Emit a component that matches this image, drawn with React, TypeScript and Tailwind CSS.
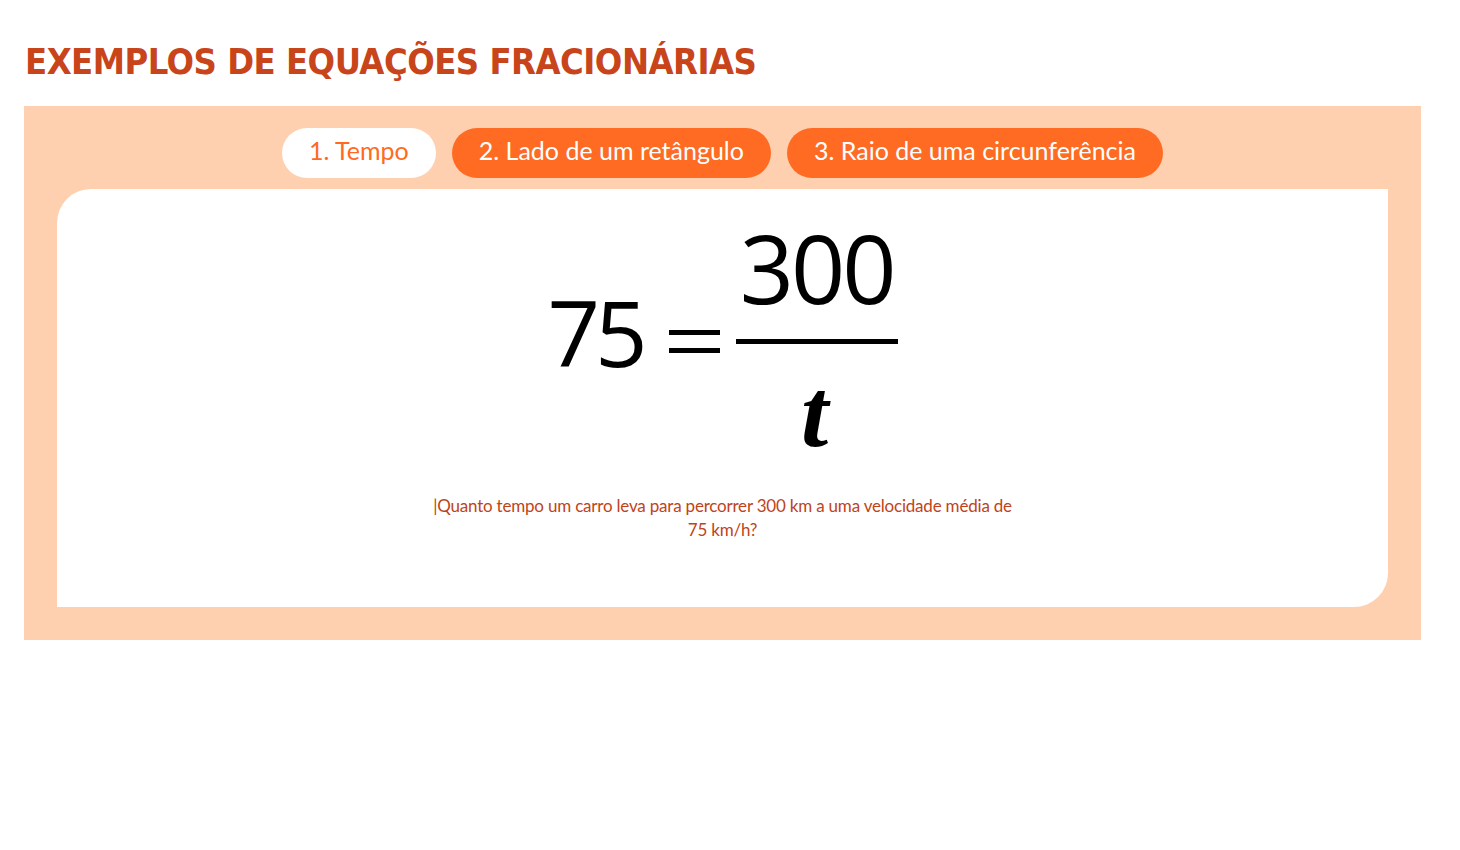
import React from "react";

export default function App() {
  const tabs = ["1. Tempo", "2. Lado de um retângulo", "3. Raio de uma circunferência"];
  return (
    <div className="w-[1460px] h-[850px] bg-white" style={{ fontFamily: "Lato, 'Open Sans', sans-serif" }}>
      <div className="pl-[24px] pr-[39px] pt-[40px]">
        <h1
          className="text-[36px] leading-[44px] font-bold text-[#c8441a] pl-[1px] tracking-[-0.5px]"
          style={{ fontFamily: "'DejaVu Sans Condensed', 'DejaVu Sans', sans-serif", fontStretch: "condensed" }}
        >
          EXEMPLOS DE EQUAÇÕES FRACIONÁRIAS
        </h1>
        <div className="mt-[22px] bg-[#ffd0b0] pt-[22px] pb-[33px] px-[33px]">
          <div className="flex justify-center gap-[16px]">
            {tabs.map((t, i) => (
              <div
                key={t}
                className={
                  "h-[50px] rounded-[25px] px-[27px] pb-[5px] flex items-center text-[25px] " +
                  (i === 0 ? "bg-white text-[#ff6a1f]" : "bg-[#ff6b22] text-white")
                }
              >
                {t}
              </div>
            ))}
          </div>
          <div className="mt-[11px] bg-white rounded-tl-[34px] rounded-br-[34px] h-[418px] flex flex-col items-center pt-[31px]">
            <div className="flex items-start text-black" style={{ fontFamily: "'Open Sans', sans-serif" }}>
              <span className="mt-[66px] text-[92px] leading-none tracking-[-5px]">75</span>
              <div className="mt-[110px] ml-[26px] mr-[16px] w-[51px] flex flex-col gap-[13px]">
                <div className="h-[5px] bg-black" />
                <div className="h-[5px] bg-black" />
              </div>
              <div className="flex flex-col items-center w-[162px]">
                <span className="h-[95px] text-[95px] leading-none tracking-[-3px]">300</span>
                <div className="w-[162px] h-[5px] bg-black mt-[24px]" />
                <span
                  className="mt-[20px] mr-[4px] h-[98px] text-[98px] leading-none italic font-bold"
                  style={{ fontFamily: "'Liberation Serif', serif" }}
                >
                  t
                </span>
              </div>
            </div>
            <p className="mt-[32px] w-[590px] text-center text-[17px] leading-[24px] text-[#c0431a] tracking-[-0.2px]">
              |Quanto tempo um carro leva para percorrer 300 km a uma velocidade média de 75 km/h?
            </p>
          </div>
        </div>
      </div>
    </div>
  );
}
